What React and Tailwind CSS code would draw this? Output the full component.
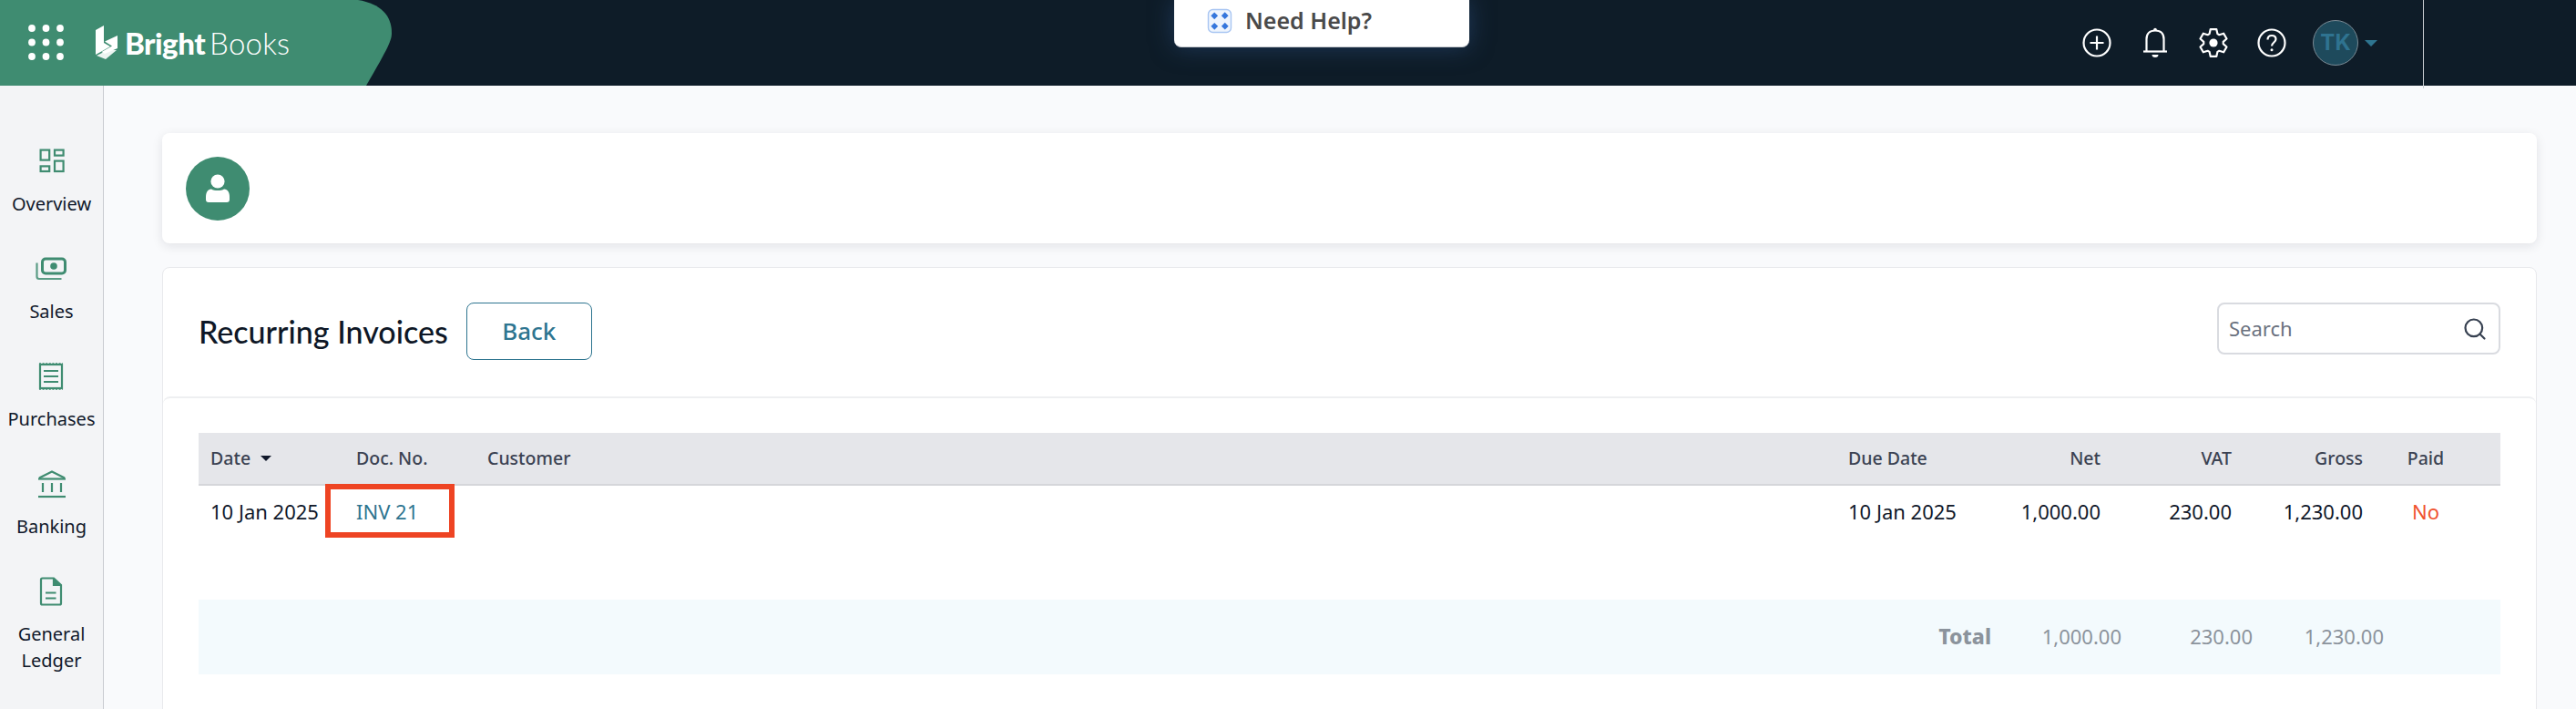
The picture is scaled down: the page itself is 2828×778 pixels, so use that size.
import React from 'react';
import { Search } from 'lucide-react';

const GREEN = '#3f8c71';

// six toothed cog used in the top bar
const gearPath = (() => {
  const pts = [];
  for (let i = 0; i < 6; i++) {
    const a = (i * Math.PI) / 3 - Math.PI / 2;
    const add = (r, d) => {
      const t = a + d;
      pts.push(`${(18 + r * Math.cos(t)).toFixed(2)} ${(18 + r * Math.sin(t)).toFixed(2)}`);
    };
    add(10.8, -0.42);
    add(15.2, -0.22);
    add(15.2, 0.22);
    add(10.8, 0.42);
  }
  return `M${pts.join('L')}Z`;
})();

const OverviewIcon = () => (
  <svg width="30" height="30" viewBox="0 0 30 30" fill="none" stroke={GREEN} strokeWidth="2.2">
    <rect x="2.6" y="2.6" width="9.6" height="11" />
    <rect x="18" y="2.6" width="9.6" height="6" />
    <rect x="2.6" y="20.4" width="9.6" height="5.6" />
    <rect x="18" y="14.6" width="9.6" height="11.4" />
  </svg>
);

const SalesIcon = () => (
  <svg className="mt-[3px]" width="36" height="30" viewBox="0 0 36 30" fill="none" stroke={GREEN}>
    <rect x="8.5" y="2" width="25" height="16" rx="3.5" strokeWidth="3" />
    <circle cx="21" cy="10" r="3.8" fill={GREEN} stroke="none" />
    <path d="M2.5 6.5V21.5Q2.5 24 5 24H29.5" strokeWidth="2.2" opacity="0.85" />
  </svg>
);

const PurchasesIcon = () => (
  <svg width="30" height="30" viewBox="0 0 30 30" fill="none" stroke={GREEN}>
    <rect x="3" y="2" width="24" height="26" strokeWidth="2.2" />
    <path d="M2 1H28M2 29H28" strokeWidth="1.6" strokeDasharray="2 1.6" />
    <path d="M7 9H23M7 15H23M7 21H23" strokeWidth="2.2" />
  </svg>
);

const BankingIcon = () => (
  <svg width="32" height="32" viewBox="0 0 32 32" fill="none" stroke={GREEN} strokeWidth="2.2">
    <path d="M2 9.5L16 2.5L30 9.5" />
    <path d="M1 10.5H31" />
    <path d="M6 15V25M16 15V25M26 15V25" />
    <path d="M1 30H31" />
  </svg>
);

const LedgerIcon = () => (
  <svg width="30" height="32" viewBox="0 0 30 32" fill="none" stroke={GREEN} strokeWidth="2.2">
    <path d="M5.5 1.5H18L26 9V29Q26 30.5 24.5 30.5H5.5Q4 30.5 4 29V3Q4 1.5 5.5 1.5Z" />
    <path d="M18 2V9H25.5" fill={GREEN} />
    <path d="M9 17.5H20.5M9 23.5H20.5" />
  </svg>
);

const PlusIcon = () => (
  <svg width="34" height="34" viewBox="0 0 34 34" fill="none" stroke="#fff" strokeWidth="2.2">
    <circle cx="17" cy="17" r="14.5" />
    <path d="M9.5 17H24.5M17 9.5V24.5" />
  </svg>
);

const BellIcon = () => (
  <svg width="32" height="36" viewBox="0 0 32 36" fill="none" stroke="#fff" strokeWidth="2.2">
    <circle cx="16" cy="3.5" r="1.8" fill="#fff" stroke="none" />
    <path d="M6.5 27V14C6.5 8 10 4.5 16 4.5C22 4.5 25.5 8 25.5 14V27" />
    <path d="M3 27.5H29" />
    <path d="M12.5 31H19.5A3.5 3 0 0 1 12.5 31Z" fill="#fff" stroke="none" />
  </svg>
);

const GearIcon = () => (
  <svg width="36" height="36" viewBox="0 0 36 36" fill="none" stroke="#fff" strokeWidth="2.2" strokeLinejoin="round">
    <path d={gearPath} />
    <circle cx="18" cy="18" r="4.6" fill="#fff" stroke="none" />
  </svg>
);

const HelpIcon = () => (
  <svg width="34" height="34" viewBox="0 0 34 34" fill="none" stroke="#fff" strokeWidth="2.2">
    <circle cx="17" cy="17" r="14.5" />
    <path d="M12.5 13.5C12.5 10.5 14.5 9 17 9C19.7 9 21.5 10.7 21.5 13C21.5 16.4 17 16.6 17 20.5" />
    <circle cx="17" cy="24.7" r="1.5" fill="#fff" stroke="none" />
  </svg>
);

const AppsIcon = () => (
  <svg width="40" height="40" viewBox="0 0 40 40" fill="#fff">
    {[4, 19.5, 35].map((cy) =>
      [4, 19.5, 35].map((cx) => <circle key={`${cx}-${cy}`} cx={cx} cy={cy} r="3.9" />)
    )}
  </svg>
);

const LogoMark = () => (
  <svg width="24" height="38" viewBox="0 0 24 38" fill="#fff">
    <path d="M0 5L9 0V19L16 23L9 27L0 32Z" />
    <path d="M10 17.5L24 11V25L10 31L6.5 29L10 27L18 22.5L10 17.5Z" />
    <path d="M1 33L13 27L23 27L11 37Z" opacity="0.9" />
  </svg>
);

const HelpBadge = () => (
  <svg width="28" height="28" viewBox="0 0 28 28" fill="none">
    <rect x="1.5" y="1.5" width="25" height="25" rx="5" stroke="#a9c6f2" strokeWidth="1.4" fill="#eef4fd" />
    <g fill="#3576dc">
      <rect x="5.5" y="5.5" width="5.5" height="5.5" transform="rotate(45 8.2 8.2)" />
      <rect x="17" y="5.5" width="5.5" height="5.5" transform="rotate(45 19.8 8.2)" />
      <rect x="5.5" y="17" width="5.5" height="5.5" transform="rotate(45 8.2 19.8)" />
      <rect x="17" y="17" width="5.5" height="5.5" transform="rotate(45 19.8 19.8)" />
    </g>
  </svg>
);

const navItems = [
  { label: ['Overview'], icon: <OverviewIcon /> },
  { label: ['Sales'], icon: <SalesIcon /> },
  { label: ['Purchases'], icon: <PurchasesIcon /> },
  { label: ['Banking'], icon: <BankingIcon /> },
  { label: ['General', 'Ledger'], icon: <LedgerIcon /> },
];

const TopBar = () => (
  <header className="relative flex h-[94px] shrink-0 items-center bg-[#0e1c28]">
    <svg className="absolute left-0 top-0" width="432" height="94" viewBox="0 0 432 94" fill={GREEN}>
      <path d="M0 0H393C418 4 430 17 430 36C430 44 427 51 402 94H0Z" />
    </svg>
    <div className="relative ml-[31px] flex items-center">
      <AppsIcon />
      <div className="ml-[34px] flex items-center">
        <LogoMark />
        <span className="ml-[8px] text-[33px] leading-none font-black tracking-[-0.5px] text-white [font-family:Lato,sans-serif]">Bright</span>
        <span className="ml-[5px] text-[33px] leading-none font-light tracking-[0.2px] text-white [font-family:Lato,sans-serif]">Books</span>
      </div>
    </div>

    <div className="absolute left-[1289px] top-0 flex h-[52px] w-[324px] items-center rounded-b-lg border-b border-[#c8cbd0] bg-white pb-[6px] pl-[36px] shadow-[0_0_26px_rgba(45,80,130,0.55)]">
      <HelpBadge />
      <span className="ml-[14px] text-[25px] font-semibold text-[#4a4a4a]">Need Help?</span>
    </div>

    <div className="ml-auto flex items-center self-stretch">
      <div className="flex w-[64px] justify-center"><PlusIcon /></div>
      <div className="flex w-[64px] justify-center"><BellIcon /></div>
      <div className="flex w-[64px] justify-center"><GearIcon /></div>
      <div className="flex w-[64px] justify-center"><HelpIcon /></div>
      <div className="ml-[13px] flex h-[50px] w-[50px] items-center justify-center rounded-full border border-[#7b8a94] bg-[#1e4a5c] text-[24px] font-bold text-[#2f7390] [font-family:Inter,sans-serif]">TK</div>
      <div className="ml-[7px] h-0 w-0 border-x-[7px] border-t-[7px] border-x-transparent border-t-[#2e7590]" />
      <div className="ml-[50px] h-[97px] w-px self-start bg-[#c9ced2]" />
      <div className="w-[167px]" />
    </div>
  </header>
);

const Sidebar = () => (
  <nav className="flex w-[114px] shrink-0 flex-col items-center gap-[42px] border-r border-[#c9cbd0] bg-[#f3f4f6] pt-[68px] text-[20px] leading-[29px] text-[#10182a]">
    {navItems.map((item) => (
      <div key={item.label[0]} className="flex flex-col items-center">
        <div className="flex h-[30px] items-center justify-center">{item.icon}</div>
        <div className="mt-[17px] text-center">
          {item.label.map((line) => (
            <div key={line}>{line}</div>
          ))}
        </div>
      </div>
    ))}
  </nav>
);

const tableCols = 'grid grid-cols-[160px_144px_1fr_190px_113px_144px_144px_112px_26px]';

const InvoicesTable = () => (
  <div className="text-[22px]">
    <div className={`${tableCols} h-[58px] items-center border-b-2 border-[#d5d6da] bg-[#e5e6ea] text-[19.5px] font-medium text-[#3b4252]`}>
      <div className="flex items-center pl-[13px]">
        Date
        <span className="ml-[11px] h-0 w-0 border-x-[6px] border-t-[6px] border-x-transparent border-t-[#10182a]" />
      </div>
      <div className="pl-[13px]">Doc. No.</div>
      <div className="pl-[13px]">Customer</div>
      <div className="pl-[13px]">Due Date</div>
      <div className="pr-[13px] text-right">Net</div>
      <div className="pr-[13px] text-right">VAT</div>
      <div className="pr-[13px] text-right">Gross</div>
      <div className="text-center">Paid</div>
    </div>
    <div className={`${tableCols} h-[59px] items-center pb-[2px] text-[#10182a]`}>
      <div className="pl-[13px] whitespace-nowrap">10 Jan 2025</div>
      <div className="relative pl-[13px] text-[#2e7590]">
        INV 21
        <div className="absolute left-[-21px] top-[-14px] h-[59px] w-[142px] border-[6px] border-[#ee4423]" />
      </div>
      <div />
      <div className="pl-[13px]">10 Jan 2025</div>
      <div className="pr-[13px] text-right">1,000.00</div>
      <div className="pr-[13px] text-right">230.00</div>
      <div className="pr-[13px] text-right">1,230.00</div>
      <div className="text-center text-[#f0532f]">No</div>
    </div>
    <div className="mt-[66px] grid h-[82px] grid-cols-[1fr_143px_144px_144px_128px] items-center bg-[#f3fafd] pb-[2px] text-right text-[#8b939c]">
      <div className="text-[23px] font-extrabold">Total</div>
      <div>1,000.00</div>
      <div>230.00</div>
      <div>1,230.00</div>
    </div>
  </div>
);

export default function App() {
  return (
    <div className="flex h-[778px] w-full flex-col overflow-hidden bg-[#f9fafc] [font-family:'Noto_Sans',sans-serif]">
      <TopBar />
      <div className="flex min-h-0 flex-1">
        <Sidebar />
        <main className="min-w-0 flex-1 pl-[64px] pr-[43px] pt-[52px]">
          <div className="flex h-[121px] items-center rounded-lg bg-white pl-[26px] shadow-[0_3px_12px_rgba(15,23,42,0.1)]">
            <div className="flex h-[70px] w-[70px] items-center justify-center rounded-full bg-[#3f8c71]">
              <svg width="28" height="32" viewBox="0 0 28 32" fill="#fff">
                <circle cx="14" cy="8" r="7.6" />
                <path d="M7 16.5C10 18.5 18 18.5 21 16.5C25 17 27 20 27 25V28Q27 31 24 31H4Q1 31 1 28V25C1 20 3 17 7 16.5Z" />
              </svg>
            </div>
          </div>
          <section className="mt-[26px] h-[500px] rounded-lg border border-[#e8e9ec] bg-white">
            <div className="flex h-[141px] items-start justify-between px-[39px] pt-[38px]">
              <div className="flex items-center">
                <h1 className="text-[34px] leading-[63px] font-medium text-[#0e1726] [font-family:Lato,sans-serif]">Recurring Invoices</h1>
                <button className="ml-[20px] h-[63px] w-[138px] rounded-lg border-[1.5px] border-[#2e7590] text-[26px] font-medium text-[#2e7590]">Back</button>
              </div>
              <div className="flex h-[57px] w-[311px] items-center rounded-lg border-2 border-[#d9dbe0] pl-[11px] pr-[12px]">
                <input placeholder="Search" className="min-w-0 flex-1 bg-transparent text-[22px] outline-none placeholder:text-[#6b7280]" />
                <Search size={28} strokeWidth={1.9} color="#374151" />
              </div>
            </div>
            <div className="h-[400px] rounded-lg border-t-2 border-[#eeeff1] px-[39px] pt-[38px]">
              <InvoicesTable />
            </div>
          </section>
        </main>
      </div>
    </div>
  );
}
